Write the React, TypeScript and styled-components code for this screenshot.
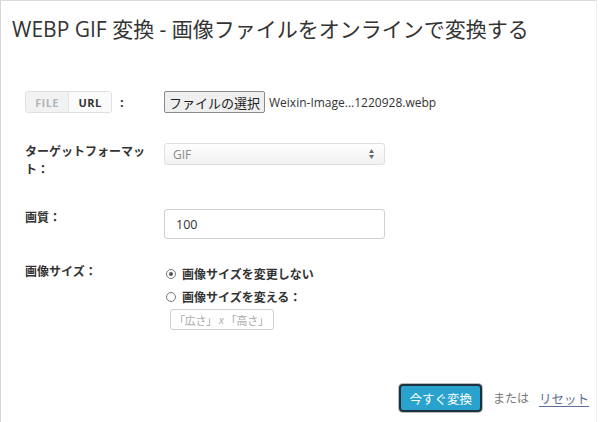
import styled, { createGlobalStyle } from 'styled-components';

const GlobalStyle = createGlobalStyle`
  html, body {
    margin: 0;
    padding: 0;
    background: #fff;
  }
  body {
    font-family: "Open Sans", "Noto Sans CJK JP", sans-serif;
    color: #333;
  }
`;

const Panel = styled.div`
  box-sizing: border-box;
  width: 597px;
  height: 422px;
  border-left: 1px solid #d6d6d6;
  border-top: 1px solid #dcdcdc;
  border-right: 1px solid #f0f0f0;
  display: flex;
  flex-direction: column;
`;

const Title = styled.h1`
  margin: 0;
  padding: 14px 0 0 11px;
  font-size: 21px;
  line-height: 28px;
  font-weight: 400;
  color: #333;
`;

const Form = styled.div`
  display: flex;
  flex-direction: column;
  padding-left: 24px;
  margin-top: 48px;
`;

const Row = styled.div<{ $space: number; $align?: string }>`
  display: grid;
  grid-template-columns: 139px 1fr;
  align-items: ${(p) => p.$align || 'start'};
  margin-top: ${(p) => p.$space}px;
`;

const Label = styled.div`
  font-size: 12px;
  font-weight: 700;
  line-height: 18px;
  color: #333;
  width: 124px;
`;

const ToggleWrap = styled.div`
  display: flex;
  align-items: center;
  gap: 8px;
`;

const Toggle = styled.div`
  display: flex;
  height: 22px;
  box-sizing: border-box;
  border: 1px solid #e0e0e0;
  border-radius: 3px;
  overflow: hidden;
`;

const ToggleItem = styled.span<{ $active?: boolean }>`
  display: flex;
  align-items: center;
  justify-content: center;
  width: 42px;
  font-size: 11px;
  font-weight: 700;
  letter-spacing: 0.4px;
  color: ${(p) => (p.$active ? '#333' : '#b0b6bc')};
  background: ${(p) => (p.$active ? '#fbfbfb' : '#f2f2f2')};
  & + & {
    border-left: 1px solid #e4e4e4;
  }
`;

const Colon = styled.span`
  font-size: 13px;
  font-weight: 700;
`;

const FileField = styled.div`
  display: flex;
  align-items: center;
  gap: 4px;
`;

const FileButton = styled.button`
  box-sizing: border-box;
  height: 22px;
  padding: 0 4px;
  border: 1px solid #8a8a8a;
  border-radius: 2px;
  background: #efefef;
  font-family: "Noto Sans CJK JP", sans-serif;
  font-size: 13px;
  color: #222;
  line-height: 1;
`;

const FileName = styled.span`
  font-size: 12px;
  color: #333;
`;

const Select = styled.div`
  box-sizing: border-box;
  width: 221px;
  height: 22px;
  border: 1px solid #e0e0e0;
  border-radius: 3px;
  background: linear-gradient(#ffffff, #f1f1f1);
  display: flex;
  align-items: center;
  justify-content: space-between;
  padding: 0 10px 0 8px;
  font-size: 12px;
  color: #8a8a8a;
`;

const Arrows = styled.span`
  display: flex;
  flex-direction: column;
  font-size: 5px;
  line-height: 5px;
  color: #666;
`;

const TextInput = styled.div<{ $w: number; $h: number; $muted?: boolean }>`
  box-sizing: border-box;
  width: ${(p) => p.$w}px;
  height: ${(p) => p.$h}px;
  border: 1px solid #cfcfcf;
  border-radius: 3px;
  display: flex;
  align-items: center;
  white-space: nowrap;
  overflow: hidden;
  padding-left: ${(p) => (p.$muted ? 3 : 11)}px;
  font-size: ${(p) => (p.$muted ? 11 : 12.5)}px;
  letter-spacing: ${(p) => (p.$muted ? -0.3 : 0)}px;
  color: ${(p) => (p.$muted ? '#aaa' : '#333')};
  background: #fff;
`;

const Times = styled.i`
  padding: 0 2px;
`;

const Radios = styled.div`
  display: flex;
  flex-direction: column;
  padding-left: 2px;
`;

const RadioLine = styled.label`
  display: flex;
  align-items: center;
  gap: 6px;
  height: 24px;
  margin-top: -1px;
  font-size: 12px;
  font-weight: 700;
  color: #333;
`;

const RadioDot = styled.span<{ $checked?: boolean }>`
  box-sizing: border-box;
  width: 10px;
  height: 10px;
  border-radius: 50%;
  border: 1px solid #777;
  background: #fff;
  display: flex;
  align-items: center;
  justify-content: center;
  &::after {
    content: '';
    display: ${(p) => (p.$checked ? 'block' : 'none')};
    width: 4px;
    height: 4px;
    border-radius: 50%;
    background: #555;
  }
`;

const SizeInput = styled.div`
  margin: 0 0 0 4px;
`;

const Footer = styled.div`
  margin-top: auto;
  margin-bottom: 10px;
  display: flex;
  justify-content: flex-end;
  align-items: center;
  padding-right: 7px;
  gap: 10px;
`;

const SubmitButton = styled.button`
  box-sizing: border-box;
  height: 28px;
  padding: 0 8px;
  border: 2px solid #1d3240;
  border-radius: 4px;
  background: #29a3cd;
  box-shadow: 0 0 0 1px #bcbcbc;
  color: #fff;
  font-family: "Noto Sans CJK JP", sans-serif;
  font-size: 12.5px;
  margin-right: 1px;
`;

const Or = styled.span`
  font-size: 12px;
  color: #777;
`;

const ResetLink = styled.a`
  font-size: 12.5px;
  color: #5c6f98;
  text-decoration: underline;
  text-underline-offset: 2px;
`;

export default function App() {
  return (
    <>
      <GlobalStyle />
      <Panel>
        <Title>WEBP GIF 変換 - 画像ファイルをオンラインで変換する</Title>
        <Form>
          <Row $space={0} $align="center">
            <ToggleWrap>
              <Toggle>
                <ToggleItem>FILE</ToggleItem>
                <ToggleItem $active>URL</ToggleItem>
              </Toggle>
              <Colon>:</Colon>
            </ToggleWrap>
            <FileField>
              <FileButton>ファイルの選択</FileButton>
              <FileName>Weixin-Image...1220928.webp</FileName>
            </FileField>
          </Row>
          <Row $space={30}>
            <Label>ターゲットフォーマット：</Label>
            <Select>
              <span>GIF</span>
              <Arrows>
                <span>▲</span>
                <span>▼</span>
              </Arrows>
            </Select>
          </Row>
          <Row $space={30}>
            <Label>画質：</Label>
            <TextInput $w={221} $h={30}>100</TextInput>
          </Row>
          <Row $space={24}>
            <Label>画像サイズ：</Label>
            <Radios>
              <RadioLine>
                <RadioDot $checked />
                画像サイズを変更しない
              </RadioLine>
              <RadioLine>
                <RadioDot />
                画像サイズを変える：
              </RadioLine>
              <SizeInput>
                <TextInput $w={104} $h={21} $muted>
                  「広さ」<Times>x</Times>「高さ」
                </TextInput>
              </SizeInput>
            </Radios>
          </Row>
        </Form>
        <Footer>
          <SubmitButton>今すぐ変換</SubmitButton>
          <Or>または</Or>
          <ResetLink href="#">リセット</ResetLink>
        </Footer>
      </Panel>
    </>
  );
}
